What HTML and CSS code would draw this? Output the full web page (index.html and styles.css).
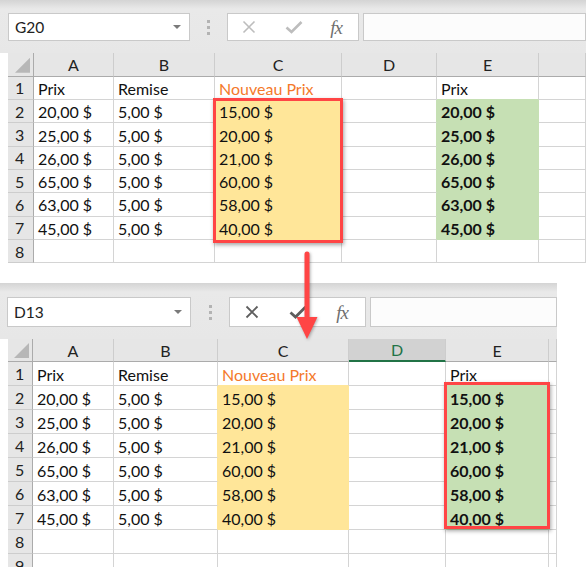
FILE: index.html
```html
<!DOCTYPE html>
<html lang="fr">
<head>
<meta charset="utf-8">
<title>Nouveau Prix</title>
<link rel="stylesheet" href="styles.css">
</head>
<body>
<div class="page">
  <section class="shot shot-top">
    <div class="toolbar">
      <div class="namebox"><span>G20</span><i class="caret"></i></div>
      <div class="grip"><i></i><i></i><i></i></div>
      <div class="fxbtns">
        <svg class="ico" viewBox="0 0 16 16" width="16" height="16"><path d="M2.5 2.5 L13.5 13.5 M13.5 2.5 L2.5 13.5" fill="none" stroke="currentColor" stroke-width="1.6"/></svg>
        <svg class="ico" viewBox="0 0 18 16" width="18" height="16"><path d="M1.5 8.5 L6.5 13 L16.5 3" fill="none" stroke="currentColor" stroke-width="2.6"/></svg>
        <span class="fx">fx</span>
      </div>
      <div class="input"></div>
    </div>
    <div class="grid">
      <div class="corner"></div><div class="ch">A</div><div class="ch">B</div><div class="ch">C</div><div class="ch">D</div><div class="ch">E</div><div class="ch"></div>
      <div class="rh">1</div><div class="c">Prix</div><div class="c">Remise</div><div class="c o by">Nouveau Prix</div><div class="c"></div><div class="c bg">Prix</div><div class="c"></div>
      <div class="rh">2</div><div class="c">20,00 $</div><div class="c ry">5,00 $</div><div class="c y">15,00 $</div><div class="c rg"></div><div class="c g">20,00 $</div><div class="c"></div>
      <div class="rh">3</div><div class="c">25,00 $</div><div class="c ry">5,00 $</div><div class="c y">20,00 $</div><div class="c rg"></div><div class="c g">25,00 $</div><div class="c"></div>
      <div class="rh">4</div><div class="c">26,00 $</div><div class="c ry">5,00 $</div><div class="c y">21,00 $</div><div class="c rg"></div><div class="c g">26,00 $</div><div class="c"></div>
      <div class="rh">5</div><div class="c">65,00 $</div><div class="c ry">5,00 $</div><div class="c y">60,00 $</div><div class="c rg"></div><div class="c g">65,00 $</div><div class="c"></div>
      <div class="rh">6</div><div class="c">63,00 $</div><div class="c ry">5,00 $</div><div class="c y">58,00 $</div><div class="c rg"></div><div class="c g">63,00 $</div><div class="c"></div>
      <div class="rh">7</div><div class="c">45,00 $</div><div class="c ry">5,00 $</div><div class="c y">40,00 $</div><div class="c rg"></div><div class="c g">45,00 $</div><div class="c"></div>
      <div class="rh">8</div><div class="c"></div><div class="c"></div><div class="c"></div><div class="c"></div><div class="c"></div><div class="c"></div>
    </div>
    <div class="mark mark-top"></div>
  </section>

  <section class="shot shot-bottom">
    <div class="toolbar">
      <div class="namebox"><span>D13</span><i class="caret"></i></div>
      <div class="grip"><i></i><i></i><i></i></div>
      <div class="fxbtns">
        <svg class="ico" viewBox="0 0 16 16" width="16" height="16"><path d="M2.5 2.5 L13.5 13.5 M13.5 2.5 L2.5 13.5" fill="none" stroke="currentColor" stroke-width="1.8"/></svg>
        <svg class="ico" viewBox="0 0 18 16" width="18" height="16"><path d="M1.5 8.5 L6.5 13 L16.5 3" fill="none" stroke="currentColor" stroke-width="2.8"/></svg>
        <span class="fx">fx</span>
      </div>
      <div class="input"></div>
    </div>
    <div class="grid">
      <div class="corner"></div><div class="ch">A</div><div class="ch">B</div><div class="ch">C</div><div class="ch sel">D</div><div class="ch">E</div><div class="ch"></div>
      <div class="rh">1</div><div class="c">Prix</div><div class="c">Remise</div><div class="c o by">Nouveau Prix</div><div class="c"></div><div class="c bg">Prix</div><div class="c"></div>
      <div class="rh">2</div><div class="c">20,00 $</div><div class="c ry">5,00 $</div><div class="c y">15,00 $</div><div class="c rg"></div><div class="c g">15,00 $</div><div class="c"></div>
      <div class="rh">3</div><div class="c">25,00 $</div><div class="c ry">5,00 $</div><div class="c y">20,00 $</div><div class="c rg"></div><div class="c g">20,00 $</div><div class="c"></div>
      <div class="rh">4</div><div class="c">26,00 $</div><div class="c ry">5,00 $</div><div class="c y">21,00 $</div><div class="c rg"></div><div class="c g">21,00 $</div><div class="c"></div>
      <div class="rh">5</div><div class="c">65,00 $</div><div class="c ry">5,00 $</div><div class="c y">60,00 $</div><div class="c rg"></div><div class="c g">60,00 $</div><div class="c"></div>
      <div class="rh">6</div><div class="c">63,00 $</div><div class="c ry">5,00 $</div><div class="c y">58,00 $</div><div class="c rg"></div><div class="c g">58,00 $</div><div class="c"></div>
      <div class="rh">7</div><div class="c">45,00 $</div><div class="c ry">5,00 $</div><div class="c y">40,00 $</div><div class="c rg"></div><div class="c g">40,00 $</div><div class="c"></div>
      <div class="rh">8</div><div class="c"></div><div class="c"></div><div class="c"></div><div class="c"></div><div class="c"></div><div class="c"></div>
      <div class="rh">9</div><div class="c"></div><div class="c"></div><div class="c"></div><div class="c"></div><div class="c"></div><div class="c"></div>
    </div>
    <div class="mark mark-bottom"></div>
  </section>

  <svg class="arrow" viewBox="0 0 40 100" width="40" height="100">
    <line x1="20" y1="15" x2="20" y2="80" stroke="#ff4545" stroke-width="5" stroke-linecap="round"/>
    <polygon points="9.5,78 30.5,78 20,100" fill="#ff4545"/>
  </svg>
</div>
</body>
</html>
```

FILE: styles.css
```css
* { box-sizing: border-box; }

html, body {
  margin: 0;
  padding: 0;
  background: #ffffff;
}

body {
  font-family: Lato, "Open Sans", "Liberation Sans", sans-serif;
  color: #111;
}

.page {
  position: relative;
  width: 586px;
  height: 567px;
  overflow: hidden;
}

.shot {
  position: relative;
  overflow: hidden;
}

.shot-top {
  width: 586px;
  height: 264px;
}

.shot-bottom {
  width: 557px;
  height: 284px;
  margin-top: 19px;
}

/* ---------- toolbar ---------- */
.toolbar {
  display: flex;
  align-items: flex-start;
  background: linear-gradient(#d4d4d4 0px, #e9e9e9 9px, #e7e7e7 100%);
}

.shot-top .toolbar {
  height: 53px;
  padding: 13px 0 0 8px;
}

.shot-bottom .toolbar {
  height: 56px;
  padding: 14px 0 0 7px;
}

.namebox {
  display: flex;
  align-items: center;
  justify-content: space-between;
  background: #fff;
  border: 1px solid #c9c9c9;
  font-size: 15.5px;
  color: #222;
  padding: 0 8px 0 6px;
}

.shot-top .namebox { width: 182px; height: 28px; }
.shot-bottom .namebox { width: 184px; height: 30px; }

.caret {
  width: 0;
  height: 0;
  border-left: 4px solid transparent;
  border-right: 4px solid transparent;
  border-top: 4px solid #7a7a7a;
}

.grip {
  display: flex;
  flex-direction: column;
  align-items: center;
  justify-content: center;
  gap: 3px;
  height: 28px;
}

.shot-top .grip { width: 37px; }
.shot-bottom .grip { width: 38px; height: 30px; }

.grip i {
  display: block;
  width: 3px;
  height: 3px;
  background: #b3b3b3;
}

.fxbtns {
  display: flex;
  align-items: center;
  justify-content: space-between;
  background: #fff;
  border: 1px solid #c9c9c9;
}

.shot-top .fxbtns {
  width: 132px;
  height: 28px;
  padding: 0 16px 0 13px;
  color: #bdbdbd;
}

.shot-bottom .fxbtns {
  width: 137px;
  height: 30px;
  padding: 0 17px 0 14px;
  color: #5e5e5e;
}

.ico { display: block; }

.fx {
  font-family: "Liberation Serif", "DejaVu Serif", serif;
  font-style: italic;
  font-size: 19px;
  color: #6f6f6f;
  letter-spacing: -1px;
  line-height: 1;
}

.input {
  flex: 1;
  margin-left: 4px;
  background: #fcfcfc;
  border: 1px solid #c9c9c9;
}

.shot-top .input { height: 28px; }
.shot-bottom .input { height: 30px; }

/* ---------- grid ---------- */
.grid {
  display: grid;
  margin-left: 8px;
  font-size: 16px;
}

.shot-top .grid {
  grid-template-columns: 26px 80px 101px 127px 95px 102px 1fr;
  grid-template-rows: 23.7px repeat(8, 23.33px);
}

.shot-bottom .grid {
  grid-template-columns: 25px 81px 104px 131px 97px 103px 1fr;
  grid-template-rows: 23px repeat(9, 24px);
}

.corner,
.ch,
.rh {
  background: #e6e6e6;
  color: #222;
}

.corner {
  position: relative;
  border-right: 1px solid #ababab;
  border-bottom: 1px solid #ababab;
}

.corner::after {
  content: "";
  position: absolute;
  right: 3px;
  bottom: 3px;
  width: 15px;
  height: 15px;
  background: #b7b7b7;
  clip-path: polygon(100% 0, 100% 100%, 0 100%);
}

.ch {
  display: flex;
  align-items: center;
  justify-content: center;
  border-right: 1px solid #cdcdcd;
  border-bottom: 1px solid #ababab;
}

.ch.sel {
  background: #d2d2d2;
  color: #217346;
  border-bottom: 2px solid #217346;
}

.rh {
  display: flex;
  align-items: center;
  padding-left: 7px;
  border-right: 1px solid #ababab;
  border-bottom: 1px solid #cdcdcd;
}

.c {
  display: flex;
  align-items: center;
  padding: 1px 0 0 4px;
  white-space: nowrap;
  background: #fff;
  border-right: 1px solid #d4d4d4;
  border-bottom: 1px solid #d4d4d4;
  color: #111;
}

.o { color: #f4792b; }

.y {
  background: #ffe699;
  border-right-color: #ffe699;
  border-bottom-color: #ffe699;
}

.g {
  background: #c6e0b4;
  border-right-color: #c6e0b4;
  border-bottom-color: #c6e0b4;
  font-weight: 700;
}

.ry { border-right-color: #ffe699; }
.rg { border-right-color: #c6e0b4; }
.by { border-bottom-color: #ffe699; }
.bg { border-bottom-color: #c6e0b4; }

/* ---------- annotations ---------- */
.mark {
  position: absolute;
  border: 3px solid #ff4545;
  box-shadow: 1px 2px 4px rgba(0, 0, 0, 0.35);
}

.mark-top {
  left: 213px;
  top: 98px;
  width: 130px;
  height: 145px;
}

.mark-bottom {
  left: 444px;
  top: 99px;
  width: 106px;
  height: 147px;
}

.arrow {
  position: absolute;
  left: 287px;
  top: 239px;
  filter: drop-shadow(1px 1px 1.5px rgba(0, 0, 0, 0.3));
}
```
